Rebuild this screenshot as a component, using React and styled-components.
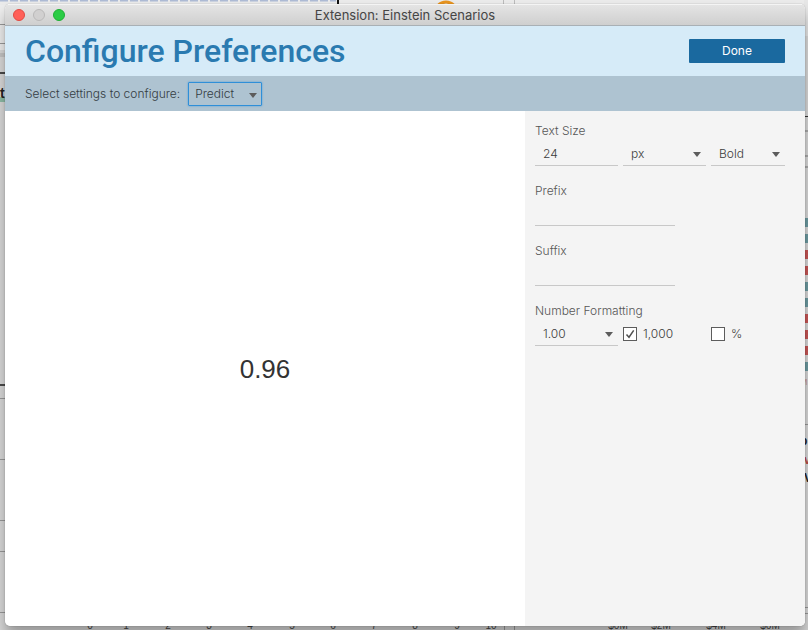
import React, { useState } from 'react';
import styled, { createGlobalStyle, css } from 'styled-components';

const GlobalStyle = createGlobalStyle`
  *, *::before, *::after { box-sizing: border-box; }
  body {
    margin: 0;
    background: #d9d9d9;
    color: #565656;
    font: 300 12px/20px Inter, "Liberation Sans", sans-serif;
  }
`;

const Desktop = styled.div`
  position: relative;
  display: flex;
  min-height: 100vh;
  padding: 4px 3px 4px 5px;
  overflow: hidden;
`;

/* Parts of the dashboard that stay visible around the dialog */
const Backdrop = styled.svg`
  position: absolute;
  font-family: "Liberation Sans", sans-serif;
  ${({ $edge }) => $edge === 'top' && css`top: 0; left: 0; width: 100%; height: 20px; background: #ebebeb;`}
  ${({ $edge }) => $edge === 'left' && css`top: 0; left: 0; width: 6px; height: 100%;`}
  ${({ $edge }) => $edge === 'right' && css`top: 0; right: 0; width: 4px; height: 100%;`}
  ${({ $edge }) => $edge === 'bottom' && css`bottom: 0; left: 0; width: 100%; height: 10px;`}
`;

const Dialog = styled.main`
  position: relative;
  flex: 1;
  display: flex;
  flex-direction: column;
  min-width: 0;
  overflow: hidden;
  border-radius: 5px;
  background: #fff;
`;

const Shadow = styled.div`
  position: relative;
  flex: 1;
  display: flex;
  min-width: 0;
  border-radius: 5px;
  box-shadow: 0 0 1px rgba(0, 0, 0, 0.5), 0 10px 14px rgba(0, 0, 0, 0.3);
`;

const TitleBar = styled.div`
  display: grid;
  grid-template-columns: 1fr auto 1fr;
  align-items: center;
  height: 22px;
  padding: 0 8px;
  border-top: 1px solid #f4f4f4;
  border-bottom: 1px solid #a9b0b5;
  background: linear-gradient(#e4e4e4, #cfcfcf);
`;

const WindowButtons = styled.div`
  display: flex;
  gap: 8px;
`;

const WindowButton = styled.button`
  width: 12px;
  height: 12px;
  padding: 0;
  border: 1px solid ${({ $edge }) => $edge};
  border-radius: 50%;
  background: ${({ $fill }) => $fill};
`;

const WindowTitle = styled.div`
  color: #454545;
  font-size: 13px;
  font-weight: 400;
`;

const Header = styled.header`
  display: flex;
  align-items: center;
  justify-content: space-between;
  height: 50px;
  padding: 0 20px;
  background: #d6ebf8;
`;

const Heading = styled.h1`
  margin: 0;
  color: #2a7ab0;
  font: 500 32px/48px Roboto, "Liberation Sans", sans-serif;
`;

const DoneButton = styled.button`
  width: 96px;
  height: 24px;
  padding: 0;
  border: 0;
  border-radius: 1px;
  background: #1a699f;
  color: #fff;
  font: inherit;
  font-weight: 400;
`;

const Toolbar = styled.div`
  display: flex;
  align-items: center;
  gap: 8px;
  height: 35px;
  padding: 0 20px;
  background: #aec3d1;
  color: #343c42;
`;

const Body = styled.div`
  flex: 1;
  display: flex;
`;

const Preview = styled.section`
  flex: 1;
  display: flex;
  align-items: center;
  justify-content: center;
  color: #333;
  font: 400 26px/32px "Liberation Sans", sans-serif;
`;

const Panel = styled.aside`
  display: flex;
  flex-direction: column;
  gap: 15px;
  width: 280px;
  padding: 10px 20px 10px 10px;
  background: #f4f4f4;
`;

const Field = styled.div`
  display: flex;
  flex-direction: column;
`;

const Label = styled.label`
  display: block;
`;

const FieldRow = styled.div`
  display: grid;
  grid-template-columns: 83px 83px 74px;
  gap: 5px;
`;

const controlStyle = css`
  width: 100%;
  height: 25px;
  padding: 0 8px;
  border: 0;
  border-bottom: 1px solid #c8c8c8;
  border-radius: 0;
  outline: 0;
  background: transparent;
  color: #3c3c3c;
  font: inherit;
`;

const TextInput = styled.input`
  ${controlStyle}
  ${({ $wide }) => $wide && css`width: 140px;`}
`;

const SelectFrame = styled.div`
  position: relative;
  ${({ $boxed }) => $boxed && css`width: 74px;`}
  &::after {
    content: '';
    position: absolute;
    top: 11px;
    right: 5px;
    border: 4px solid transparent;
    border-top: 5px solid #5c5c5c;
    border-bottom: 0;
    pointer-events: none;
  }
`;

const SelectInput = styled.select`
  ${controlStyle}
  padding-top: 2px;
  appearance: none;
  ${({ $boxed }) => $boxed && css`
    height: 24px;
    padding: 0 6px;
    border: 1px solid #2f8fd8;
    border-radius: 1px;
    box-shadow: 0 0 2px #4a9bd8;
    color: #343c42;
  `}
`;

const CheckLabel = styled.label`
  display: flex;
  align-items: center;
  gap: 6px;
  height: 25px;
  color: #3c3c3c;
`;

const CheckBox = styled.span`
  display: grid;
  width: 14px;
  height: 14px;
  & > * { grid-area: 1 / 1; }
`;

const CheckInput = styled.input`
  appearance: none;
  width: 14px;
  height: 14px;
  margin: 0;
  border: 1px solid #5c5c5c;
  background: #fff;
  & + svg { visibility: hidden; pointer-events: none; }
  &:checked + svg { visibility: visible; }
`;

function Select({ options, boxed, ...rest }) {
  return (
    <SelectFrame $boxed={boxed}>
      <SelectInput $boxed={boxed} {...rest}>
        {options.map((option) => <option key={option}>{option}</option>)}
      </SelectInput>
    </SelectFrame>
  );
}

function Check({ label, ...rest }) {
  return (
    <CheckLabel>
      <CheckBox>
        <CheckInput type="checkbox" {...rest} />
        <svg width="14" height="14" viewBox="0 0 14 14" fill="none" stroke="#505050" strokeWidth="1.5">
          <path d="M3.5 7.5 6 10.2 10.7 3.3" />
        </svg>
      </CheckBox>
      {label}
    </CheckLabel>
  );
}

const TEAL = '#6d9ba2';
const RED = '#c85655';
const bars = [TEAL, TEAL, RED, RED, TEAL, TEAL, RED, RED, RED, TEAL];
const ticks = [
  [90, '0'], [126, '1'], [168, '2'], [209, '3'], [250, '4'], [292, '5'], [333, '6'], [374, '7'],
  [415, '8'], [457, '9'], [491, '10'], [618, '$0M'], [661, '$2M'], [716, '$4M'], [770, '$6M'],
];

function Dashboard() {
  return (
    <>
      <Backdrop $edge="top" aria-hidden="true">
        <path d="M0 .5H336" stroke="#aebbd5" strokeWidth="2" strokeDasharray="8 2" />
        <path d="M338 0V5" stroke="#111" strokeWidth="2" />
        <circle cx="446" cy="13" r="11" fill="none" stroke="#e8941f" strokeWidth="3" />
        <path d="M503.5 0V5M514.5 0V5" stroke="#bbb" />
      </Backdrop>
      <Backdrop $edge="left" aria-hidden="true">
        <path d="M0 5H6V50H0Z" fill="#ededed" />
        <path d="M0 24.5H6M0 43.5H6M0 398.5H6M0 459.5H6M0 520.5H6M0 551.5H6M0 612.5H6" stroke="#999" />
        <path d="M0 55H6" stroke="#c4c4c4" strokeWidth="4" />
        <path d="M0 73H6M0 385H6" stroke="#4a4a4a" strokeWidth="2" />
        <path d="M0 97H6V102H0Z" fill="#8dbba6" />
        <text x="0" y="98" fontSize="14" fontWeight="700" fill="#222">t</text>
      </Backdrop>
      <Backdrop $edge="right" aria-hidden="true">
        <path d="M0 0H4V36H0Z" fill="#e6e6e6" />
        <path d="M0 116.5H4" stroke="#333" />
        <path d="M0 131H4M0 156H4M0 167H4" stroke="#aaa" strokeWidth="2" />
        <path d="M0 424.5H4M0 607.5H4M0 613.5H4" stroke="#999" />
        {bars.map((fill, i) => <rect key={i} y={218 + i * 16} width="4" height="9" fill={fill} />)}
        <text x="-4" y="385" fontSize="9" fill="#c89a94">M</text>
        <text x="-4" y="445" fontSize="12" fontWeight="700" fill="#222">p</text>
        <text x="0" y="464" fontSize="12" fontWeight="700" fill="#b84a4a">v</text>
        <text x="0" y="482" fontSize="12" fontWeight="700" fill="#222">V</text>
      </Backdrop>
      <Backdrop $edge="bottom" aria-hidden="true">
        <path d="M504.5 0V10M514.5 0V10" stroke="#999" />
        {ticks.map(([x, text]) => (
          <text key={text} x={x} y="9" fontSize="10" textAnchor="middle" fill="#444">{text}</text>
        ))}
      </Backdrop>
    </>
  );
}

export default function App() {
  const [size, setSize] = useState('24');
  const [prefix, setPrefix] = useState('');
  const [suffix, setSuffix] = useState('');

  return (
    <Desktop>
      <GlobalStyle />
      <Dashboard />
      <Shadow>
        <Dialog>
          <TitleBar>
            <WindowButtons>
              <WindowButton aria-label="Close" $fill="#ff6058" $edge="#e14942" />
              <WindowButton aria-label="Minimize" $fill="#d1d0d0" $edge="#b9b8b8" />
              <WindowButton aria-label="Zoom" $fill="#2bcc45" $edge="#1fae34" />
            </WindowButtons>
            <WindowTitle>Extension: Einstein Scenarios</WindowTitle>
          </TitleBar>
          <Header>
            <Heading>Configure Preferences</Heading>
            <DoneButton>Done</DoneButton>
          </Header>
          <Toolbar>
            <Label htmlFor="setting">Select settings to configure:</Label>
            <Select id="setting" boxed options={['Predict']} />
          </Toolbar>
          <Body>
            <Preview>0.96</Preview>
            <Panel>
              <Field>
                <Label htmlFor="size">Text Size</Label>
                <FieldRow>
                  <TextInput id="size" value={size} onChange={(e) => setSize(e.target.value)} />
                  <Select aria-label="Unit" options={['px']} />
                  <Select aria-label="Weight" options={['Bold']} />
                </FieldRow>
              </Field>
              <Field>
                <Label htmlFor="prefix">Prefix</Label>
                <TextInput id="prefix" $wide value={prefix} onChange={(e) => setPrefix(e.target.value)} />
              </Field>
              <Field>
                <Label htmlFor="suffix">Suffix</Label>
                <TextInput id="suffix" $wide value={suffix} onChange={(e) => setSuffix(e.target.value)} />
              </Field>
              <Field>
                <Label htmlFor="format">Number Formatting</Label>
                <FieldRow>
                  <Select id="format" options={['1.00']} />
                  <Check label="1,000" defaultChecked />
                  <Check label="%" />
                </FieldRow>
              </Field>
            </Panel>
          </Body>
        </Dialog>
      </Shadow>
    </Desktop>
  );
}
